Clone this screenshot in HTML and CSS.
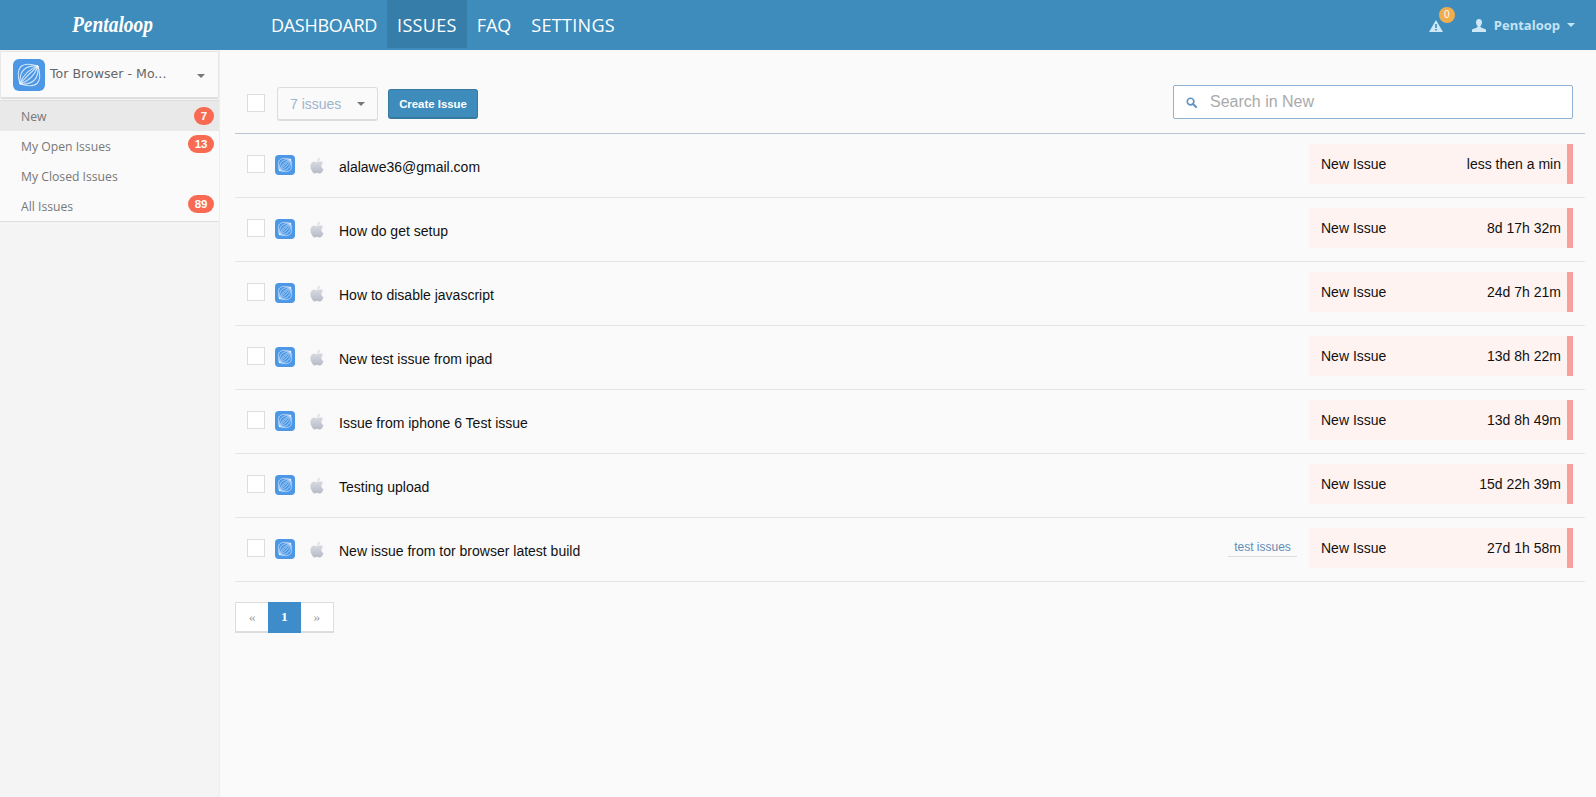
FILE: index.html
```html
<!DOCTYPE html>
<html lang="en">
<head>
<meta charset="utf-8">
<title>Pentaloop</title>
<link rel="stylesheet" href="styles.css">
</head>
<body>
<svg class="defs" width="0" height="0" aria-hidden="true">
  <defs>
    <linearGradient id="apple-fill" x1="0" y1="0" x2="0" y2="1">
      <stop offset="0" stop-color="#e4e6ea"/>
      <stop offset="1" stop-color="#b4bac6"/>
    </linearGradient>
    <symbol id="swirl" viewBox="0 0 32 32">
      <rect width="32" height="32" rx="6" fill="#4c97e6"/>
      <g fill="none" stroke="#fff" stroke-width="1.100" stroke-opacity=".72">
        <path d="M7 25C2 8 8 2 25 7"/>
        <path d="M7 25C6 12 12 6 25 7"/>
        <path d="M7 25C10 16 16 10 25 7"/>
        <path d="M7 25C12 19 19 12 25 7"/>
        <path d="M7 25C16 22 22 16 25 7"/>
        <path d="M7 25C20 26 26 20 25 7"/>
        <path d="M7 25C24 30 30 24 25 7"/>
      </g>
    </symbol>
    <symbol id="apple" viewBox="0 0 16 16">
      <path fill="url(#apple-fill)" d="M11.182.008C11.148-.03 9.923.023 8.857 1.18c-1.066 1.156-.902 2.482-.878 2.516.024.034 1.52.087 2.475-1.258.955-1.345.762-2.391.728-2.43zm3.314 11.733c-.048-.096-2.325-1.234-2.113-3.422.212-2.189 1.675-2.789 1.698-2.854.023-.065-.597-.79-1.254-1.157a3.692 3.692 0 0 0-1.563-.434c-.108-.003-.483-.095-1.254.116-.508.139-1.653.589-1.968.607-.316.018-1.256-.522-2.267-.665-.647-.125-1.333.131-1.824.328-.49.196-1.422.754-2.074 2.237-.652 1.482-.311 3.83-.067 4.56.244.729.625 1.924 1.273 2.796.576.984 1.34 1.667 1.659 1.899.319.232 1.219.386 1.843.067.502-.308 1.408-.485 1.766-.472.357.013 1.061.154 1.782.539.571.197 1.111.115 1.652-.105.541-.221 1.324-1.059 2.238-2.758.347-.79.505-1.217.473-1.282z"/>
    </symbol>
  </defs>
</svg>

<header class="topbar">
  <div class="brand"><span class="brand-name">Pentaloop</span></div>
  <nav class="mainnav">
    <a class="navlink navlink-narrow">DASHBOARD</a>
    <a class="navlink navlink-active">ISSUES</a>
    <a class="navlink navlink-plain">FAQ</a>
    <a class="navlink">SETTINGS</a>
  </nav>
  <div class="topright">
    <div class="alert">
      <svg class="alert-icon" viewBox="0 0 14 12"><path fill="#cfe8f8" fill-rule="evenodd" d="M7 0l7 12H0zM6.2 4v4h1.6V4zM6.2 9v1.5h1.6V9z"/></svg>
      <span class="alert-badge">0</span>
    </div>
    <svg class="user-icon" viewBox="0 0 14 13"><path fill="#cfe8f8" d="M7 0c2 0 3 1.400 3 3.300 0 1.500-.7 3-1.500 3.700v1.300L14 10.500V13H0v-2.500l5.500-2.200V7C4.700 6.300 4 4.800 4 3.300 4 1.400 5 0 7 0z"/></svg>
    <span class="username">Pentaloop</span>
    <span class="caret caret-light"></span>
  </div>
</header>

<div class="layout">
  <aside class="sidebar">
    <div class="project">
      <svg class="project-logo"><use href="#swirl"/></svg>
      <span class="project-name">Tor Browser - Mo...</span>
      <span class="caret caret-dark"></span>
    </div>
    <ul class="menu">
      <li class="menu-item menu-item-active"><span>New</span><span class="count">7</span></li>
      <li class="menu-item"><span>My Open Issues</span><span class="count count-raised">13</span></li>
      <li class="menu-item"><span>My Closed Issues</span></li>
      <li class="menu-item"><span>All Issues</span><span class="count count-raised">89</span></li>
    </ul>
  </aside>

  <main class="content">
    <div class="toolbar">
      <span class="check"></span>
      <div class="issue-select"><span>7 issues</span><span class="caret caret-dark"></span></div>
      <button class="create">Create Issue</button>
      <label class="search">
        <svg class="search-icon" viewBox="0 0 12 12"><circle cx="5" cy="5" r="3.600" fill="none" stroke="#5f93c0" stroke-width="1.800"/><path d="M7.800 7.800l3.200 3.200" stroke="#5f93c0" stroke-width="2.200" stroke-linecap="round"/></svg>
        <input class="search-input" type="text" placeholder="Search in New">
      </label>
    </div>

    <div class="issues">
      <article class="issue">
        <span class="check check-row"></span>
        <svg class="app-icon"><use href="#swirl"/></svg>
        <svg class="os-icon"><use href="#apple"/></svg>
        <span class="title">alalawe36@gmail.com</span>
        <div class="status"><span>New Issue</span><span>less then a min</span></div>
      </article>
      <article class="issue">
        <span class="check check-row"></span>
        <svg class="app-icon"><use href="#swirl"/></svg>
        <svg class="os-icon"><use href="#apple"/></svg>
        <span class="title">How do get setup</span>
        <div class="status"><span>New Issue</span><span>8d 17h 32m</span></div>
      </article>
      <article class="issue">
        <span class="check check-row"></span>
        <svg class="app-icon"><use href="#swirl"/></svg>
        <svg class="os-icon"><use href="#apple"/></svg>
        <span class="title">How to disable javascript</span>
        <div class="status"><span>New Issue</span><span>24d 7h 21m</span></div>
      </article>
      <article class="issue">
        <span class="check check-row"></span>
        <svg class="app-icon"><use href="#swirl"/></svg>
        <svg class="os-icon"><use href="#apple"/></svg>
        <span class="title">New test issue from ipad</span>
        <div class="status"><span>New Issue</span><span>13d 8h 22m</span></div>
      </article>
      <article class="issue">
        <span class="check check-row"></span>
        <svg class="app-icon"><use href="#swirl"/></svg>
        <svg class="os-icon"><use href="#apple"/></svg>
        <span class="title">Issue from iphone 6 Test issue</span>
        <div class="status"><span>New Issue</span><span>13d 8h 49m</span></div>
      </article>
      <article class="issue">
        <span class="check check-row"></span>
        <svg class="app-icon"><use href="#swirl"/></svg>
        <svg class="os-icon"><use href="#apple"/></svg>
        <span class="title">Testing upload</span>
        <div class="status"><span>New Issue</span><span>15d 22h 39m</span></div>
      </article>
      <article class="issue">
        <span class="check check-row"></span>
        <svg class="app-icon"><use href="#swirl"/></svg>
        <svg class="os-icon"><use href="#apple"/></svg>
        <span class="title">New issue from tor browser latest build</span>
        <span class="tag">test issues</span>
        <div class="status"><span>New Issue</span><span>27d 1h 58m</span></div>
      </article>
    </div>

    <div class="pager">
      <a class="page">«</a>
      <a class="page page-active">1</a>
      <a class="page">»</a>
    </div>
  </main>
</div>
</body>
</html>
```

FILE: styles.css
```css
* { box-sizing: border-box; }
html, body { height: 100%; }
body {
  margin: 0;
  background: #fafafa;
  font-family: "Liberation Sans", Arial, sans-serif;
  color: #111;
  overflow: hidden;
  display: flex;
  flex-direction: column;
}
.defs { position: absolute; }

.topbar {
  flex: 0 0 50px;
  display: flex;
  background: #3d8cbc;
  color: #fff;
}
.brand {
  width: 261px;
  padding: 9px 0 0 72px;
  font-family: "Liberation Serif", serif;
  font-style: italic;
  font-weight: 700;
  font-size: 24px;
  line-height: 30px;
}
.brand-name {
  display: inline-block;
  transform: scaleX(.81);
  transform-origin: left center;
}
.mainnav { display: flex; height: 48px; }
.navlink {
  padding: 0 10px;
  font-family: "Open Sans", sans-serif;
  font-size: 18px;
  letter-spacing: .3px;
  line-height: 50px;
}
.navlink-narrow { letter-spacing: -.3px; }
.navlink-plain { letter-spacing: 0; }
.navlink-active { background: #377daa; }
.topright {
  margin-left: auto;
  display: flex;
  align-items: center;
  padding-right: 21px;
  height: 50px;
}
.alert { position: relative; display: flex; margin-right: 29px; }
.alert-icon { width: 14px; height: 12px; margin-top: 1px; }
.alert-badge {
  position: absolute;
  left: 10px;
  top: -12px;
  width: 16px;
  height: 16px;
  border-radius: 50%;
  background: #f0ad4e;
  color: #fff;
  font-size: 10px;
  line-height: 16px;
  text-align: center;
}
.user-icon { width: 14px; height: 13px; margin-right: 8px; }
.username {
  font-family: "Open Sans", sans-serif;
  font-weight: 700;
  font-size: 13px;
  color: #c6e3f5;
  margin-right: 7px;
}
.caret {
  display: inline-block;
  width: 0;
  height: 0;
  border-left: 4px solid transparent;
  border-right: 4px solid transparent;
  border-top: 4px solid #777;
}
.caret-light { border-top-color: #c6e3f5; }
.caret-dark { border-top-color: #777; }

.layout { flex: 1; display: flex; min-height: 0; }
.sidebar {
  flex: 0 0 220px;
  background: #f4f4f4;
  border-right: 1px solid #eee;
  padding-top: 1px;
}
.project {
  height: 48px;
  margin: 0 0 1px 0;
  padding: 0 12px 0 13px;
  display: flex;
  align-items: center;
  background: #fafafa;
  border: 1px solid #e8e8e8;
  border-bottom: 2px solid #dedede;
  border-radius: 2px;
}
.project-logo { width: 32px; height: 32px; flex: none; margin-left: -1px; }
.project-name {
  margin-left: 5px;
  font-family: "DejaVu Sans", sans-serif;
  font-size: 12.600px;
  color: #666;
  margin-bottom: 2px;
}
.project .caret { margin-left: auto; margin-right: 1px; margin-top: 3px; }
.menu {
  margin: 0;
  padding: 0;
  list-style: none;
  background: #fafafa;
  border-top: 1px solid #dedede;
  border-bottom: 1px solid #dedede;
}
.menu-item {
  height: 30px;
  padding: 0 5px 0 21px;
  display: flex;
  justify-content: space-between;
  align-items: center;
  font-family: "Open Sans", sans-serif;
  font-size: 12.200px;
  color: #777;
}
.menu-item-active { background: #e9e9e9; }
.count {
  min-width: 20px;
  height: 18px;
  padding: 0 6.500px;
  border-radius: 9px;
  background: #f96a52;
  color: #fff;
  font-family: "Liberation Sans", sans-serif;
  font-size: 11.500px;
  font-weight: 700;
  line-height: 18px;
  text-align: center;
}
.count-raised { margin-top: -4px; }

.content { flex: 1; min-width: 0; padding: 0 11px 0 15px; }
.toolbar {
  height: 84px;
  padding: 37px 12px 0 12px;
  display: flex;
  align-items: flex-start;
  border-bottom: 1px solid #b9c6d2;
}
.check {
  width: 18px;
  height: 18px;
  flex: none;
  background: #fff;
  border: 1px solid #ddd;
}
.toolbar > .check { margin-top: 7px; }
.issue-select {
  width: 101px;
  height: 34px;
  margin-left: 12px;
  padding: 0 12px;
  display: flex;
  align-items: center;
  justify-content: space-between;
  background: #fafafa;
  border: 1px solid #ddd;
  border-bottom-width: 2px;
  border-radius: 3px;
  color: #9db5cd;
  font-size: 14px;
}
.create {
  width: 90px;
  height: 30px;
  margin: 2px 0 0 10px;
  padding: 0;
  background: #3d8cbc;
  color: #fff;
  border: 1px solid #37799f;
  border-bottom-width: 2px;
  border-radius: 3px;
  font-family: "Liberation Sans", sans-serif;
  font-size: 11.400px;
  font-weight: 700;
}
.search {
  width: 400px;
  height: 34px;
  margin: -2px 0 0 auto;
  padding-left: 12px;
  display: flex;
  align-items: center;
  background: #fff;
  border: 1px solid #8fb3d5;
  border-radius: 2px;
}
.search-icon { width: 11px; height: 11px; flex: none; }
.search-input {
  flex: 1;
  min-width: 0;
  margin-left: 13px;
  border: 0;
  padding: 0;
  outline: 0;
  background: transparent;
  font-family: "Liberation Sans", sans-serif;
  font-size: 16px;
}
.search-input::placeholder { color: #aaa; opacity: 1; }

.issue {
  height: 64px;
  padding: 10px 12px 0 12px;
  display: flex;
  align-items: flex-start;
  border-bottom: 1px solid #e5e5e5;
}
.check-row { margin-top: 11px; }
.app-icon { width: 20px; height: 20px; flex: none; margin: 11px 0 0 10px; }
.os-icon { width: 16px; height: 17px; flex: none; margin: 13px 0 0 14px; }
.title { margin: 13px 0 0 14px; font-size: 14px; line-height: 20px; color: #111; }
.tag {
  margin: 9px 12px 0 auto;
  height: 20px;
  font-size: 12px;
  line-height: 20px;
  color: #5f8db5;
  border-bottom: 1px solid #ddd;
  width: 69px;
  text-align: center;
  white-space: nowrap;
}
.status {
  width: 264px;
  height: 40px;
  margin-left: auto;
  padding: 0 6px 0 12px;
  display: flex;
  align-items: center;
  justify-content: space-between;
  background: #fff3f2;
  border-right: 6px solid #f8a09c;
  font-size: 14px;
  color: #111;
}
.tag + .status { margin-left: 0; }

.pager {
  display: flex;
  width: 99px;
  height: 31px;
  margin-top: 20px;
  background: #fff;
  border: 1px solid #ddd;
  border-bottom-width: 2px;
}
.page {
  flex: 1;
  text-align: center;
  font-family: "Liberation Serif", serif;
  font-size: 13.500px;
  line-height: 28px;
  color: #999;
}
.page-active { background: #3f8ccb; color: #fff; font-weight: 700; margin: -1px 0 -2px; line-height: 30px; }
```
